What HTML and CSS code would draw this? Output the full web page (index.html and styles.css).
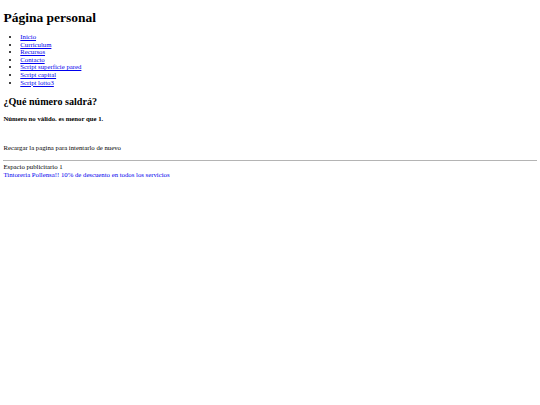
FILE: index.html
```html
<!DOCTYPE html>
<html lang="es">
<head>
    <meta charset="UTF-8">
    <title>Página personal</title>
    <link rel="stylesheet" href="styles.css">
</head>
<body>
    <h1>Página personal</h1>

    <ul class="menu">
        <li><a href="#">Inicio</a></li>
        <li><a href="#">Curriculum</a></li>
        <li><a href="#">Recursos</a></li>
        <li><a href="#">Contacto</a></li>
        <li><a href="#">Script superficie pared</a></li>
        <li><a href="#">Script capital</a></li>
        <li><a href="#">Script lotto3</a></li>
    </ul>

    <h2>¿Qué número saldrá?</h2>
    <h4 class="resultado">Número no válido. es menor que 1.</h4>
    <br>
    <p>Recargar la pagina para intentarlo de nuevo</p>

    <hr>
    <div class="publi">
        Espacio publicitario 1<br>
        <a href="#">Tintoreria Pollensa!! 10% de descuento en todos los servicios</a>
    </div>
</body>
</html>
```
FILE: styles.css
```css
body {
    font-family: "Liberation Serif", "Times New Roman", serif;
    font-size: 6.75px;
    line-height: 1.125;
    margin: 3.4px;
    color: #000;
}

h1 {
    margin: 7px 0 7.5px;
}

h2 {
    margin-top: 9.4px;
}

a {
    color: #0000ee;
}

.menu {
    margin-top: 7.5px;
    padding-left: 16.9px;
}

.resultado {
    margin: 7.5px 0 6.75px;
}

hr {
    border: 0;
    border-top: 1px solid #b4b4b4;
    margin: 8px 0 2.5px;
}
```
